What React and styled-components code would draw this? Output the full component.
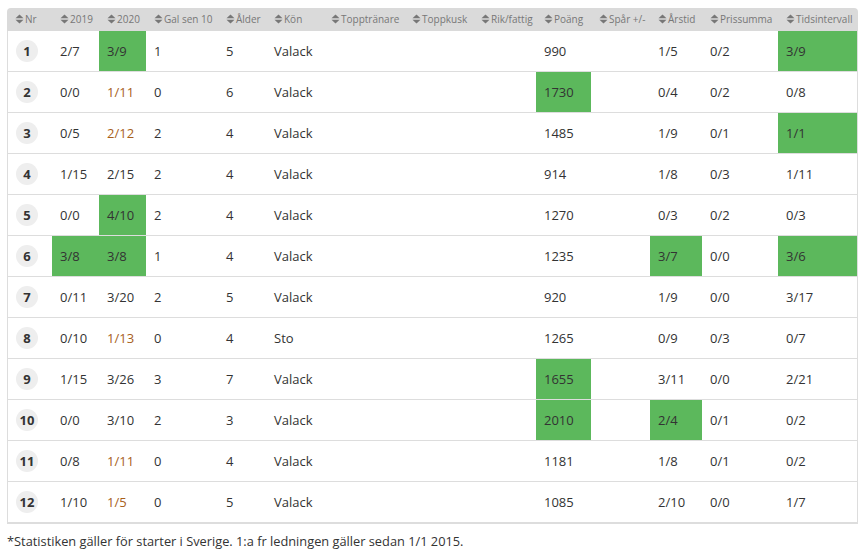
import React from 'react'
import styled, { createGlobalStyle } from 'styled-components'

const Global = createGlobalStyle`
  body {
    margin: 0;
    padding: 8px 9px 0 7px;
    font-family: "Open Sans", "Liberation Sans", sans-serif;
    color: #333;
    background: #fff;
  }
`

const Table = styled.table`
  width: 851px;
  border-collapse: separate;
  border-spacing: 0;
  table-layout: fixed;
`

const HeadCell = styled.th`
  height: 23px;
  padding: 0 0 0 8px;
  background: #dadada;
  color: #777;
  font-size: 10px;
  font-weight: 400;
  text-align: left;
  white-space: nowrap;
  &:first-child { border-top-left-radius: 4px; }
  &:last-child { border-top-right-radius: 4px; }
`

const HeadInner = styled.span`
  display: inline-flex;
  align-items: center;
  gap: 1px;
`

const Row = styled.tr`
  td { border-bottom: 1px solid #ddd; }
  td:first-child { border-left: 1px solid #ddd; }
  td:last-child { border-right: 1px solid #ddd; }
  &:last-child td { border-bottom: 2px solid #ddd; }
`

const Cell = styled.td`
  height: 40px;
  padding: 0 0 0 8px;
  font-size: 13px;
  color: ${p => (p.$warn ? '#a8601a' : '#333')};
  background: ${p => (p.$good ? '#5cb85c' : 'transparent')};
  white-space: nowrap;
`

const Badge = styled.span`
  display: inline-flex;
  align-items: center;
  justify-content: center;
  width: 22px;
  height: 22px;
  border-radius: 50%;
  background: #eee;
  font-size: 13px;
  font-weight: 700;
  color: #333;
`

const Note = styled.p`
  margin: 8px 0 0 0;
  font-size: 12.8px;
  color: #333;
`

const SortIcon = () => (
  <svg width="9" height="10" viewBox="0 0 9 10">
    <path d="M4.5 0.5 L8.5 4.3 L0.5 4.3 Z" fill="#777" />
    <path d="M4.5 9.5 L8.5 5.7 L0.5 5.7 Z" fill="#777" />
  </svg>
)

const columns = [
  ['Nr', 45], ['2019', 47], ['2020', 47], ['Gal sen 10', 72], ['Ålder', 48],
  ['Kön', 57], ['Topptränare', 81], ['Toppkusk', 69], ['Rik/fattig', 63],
  ['Poäng', 55], ['Spår +/-', 59], ['Årstid', 52], ['Prissumma', 76], ['Tidsintervall', 80],
]

// "+" = green cell, "!" = orange text
const rows = [
  ['2/7', '3/9+', '1', '5', 'Valack', '990', '1/5', '0/2', '3/9+'],
  ['0/0', '1/11!', '0', '6', 'Valack', '1730+', '0/4', '0/2', '0/8'],
  ['0/5', '2/12!', '2', '4', 'Valack', '1485', '1/9', '0/1', '1/1+'],
  ['1/15', '2/15', '2', '4', 'Valack', '914', '1/8', '0/3', '1/11'],
  ['0/0', '4/10+', '2', '4', 'Valack', '1270', '0/3', '0/2', '0/3'],
  ['3/8+', '3/8+', '1', '4', 'Valack', '1235', '3/7+', '0/0', '3/6+'],
  ['0/11', '3/20', '2', '5', 'Valack', '920', '1/9', '0/0', '3/17'],
  ['0/10', '1/13!', '0', '4', 'Sto', '1265', '0/9', '0/3', '0/7'],
  ['1/15', '3/26', '3', '7', 'Valack', '1655+', '3/11', '0/0', '2/21'],
  ['0/0', '3/10', '2', '3', 'Valack', '2010+', '2/4+', '0/1', '0/2'],
  ['0/8', '1/11!', '0', '4', 'Valack', '1181', '1/8', '0/1', '0/2'],
  ['1/10', '1/5!', '0', '5', 'Valack', '1085', '2/10', '0/0', '1/7'],
]

const parse = v => {
  const last = v.slice(-1)
  if (last === '+') return { text: v.slice(0, -1), good: true }
  if (last === '!') return { text: v.slice(0, -1), warn: true }
  return { text: v }
}

const App = () => {
  return (
    <>
      <Global />
      <Table>
        <colgroup>
          {columns.map(([name, w]) => <col key={name} style={{ width: w }} />)}
        </colgroup>
        <thead>
          <tr>
            {columns.map(([name]) => (
              <HeadCell key={name}>
                <HeadInner><SortIcon />{name}</HeadInner>
              </HeadCell>
            ))}
          </tr>
        </thead>
        <tbody>
          {rows.map((r, i) => {
            const [a, b, gal, age, sex, pts, season, prize, interval] = r.map(parse)
            const cells = [a, b, gal, age, sex, {}, {}, {}, pts, {}, season, prize, interval]
            return (
              <Row key={i}>
                <Cell><Badge>{i + 1}</Badge></Cell>
                {cells.map((c, k) => (
                  <Cell key={k} $good={c.good} $warn={c.warn}>{c.text}</Cell>
                ))}
              </Row>
            )
          })}
        </tbody>
      </Table>
      <Note>*Statistiken gäller för starter i Sverige. 1:a fr ledningen gäller sedan 1/1 2015.</Note>
    </>
  )
}

export default App
